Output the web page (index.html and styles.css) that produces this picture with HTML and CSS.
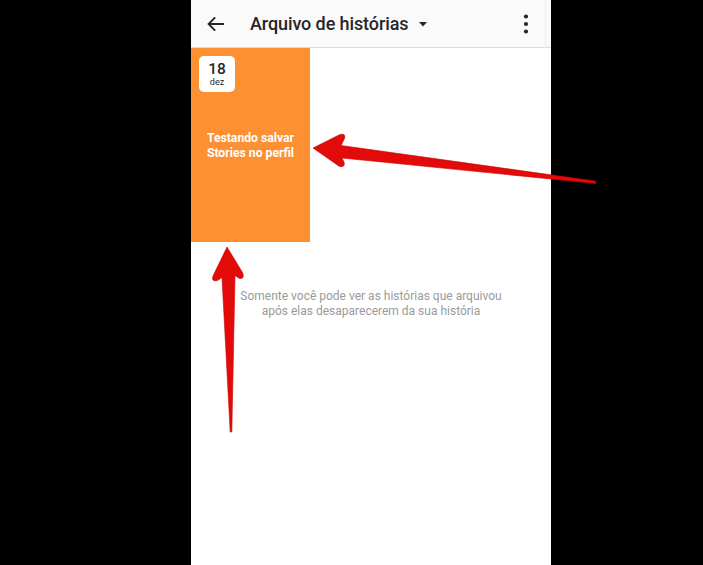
FILE: index.html
```html
<!DOCTYPE html>
<html lang="pt">
<head>
<meta charset="utf-8">
<title>Arquivo de histórias</title>
<link rel="stylesheet" href="styles.css">
</head>
<body>
<div class="phone">
  <header class="topbar">
    <svg class="back" width="18" height="16" viewBox="0 0 18 16"><path d="M17 8H1.8M8.2 1.4L1.6 8l6.6 6.6" fill="none" stroke="#262626" stroke-width="1.9"/></svg>
    <div class="title">Arquivo de histórias</div>
    <svg class="caret" width="8" height="5" viewBox="0 0 8 5"><path d="M0 0h8L4 4.5z" fill="#262626"/></svg>
    <div class="spacer"></div>
    <svg class="kebab" width="6" height="20" viewBox="0 0 6 20"><circle cx="3" cy="2.5" r="2.1" fill="#262626"/><circle cx="3" cy="10" r="2.1" fill="#262626"/><circle cx="3" cy="17.5" r="2.1" fill="#262626"/></svg>
  </header>
  <main class="content">
    <div class="grid">
      <div class="tile">
        <div class="badge"><span class="day">18</span><span class="month">dez</span></div>
        <div class="tile-text">Testando salvar<br>Stories no perfil</div>
      </div>
    </div>
    <p class="hint">Somente você pode ver as histórias que arquivou<br>após elas desaparecerem da sua história</p>
  </main>
  <div class="scrollline"></div>
</div>
<svg class="arrows" width="703" height="565" viewBox="0 0 703 565">
  <path d="M313,148 L340,134.5 Q346,133 344.5,138.5 L341,145.5 L595,181 L596,183.5 L342,158 L344,162 Q345.5,167.5 339.5,166.5 Z" fill="#e30a0a" stroke="#c80000" stroke-width="0.6"/>
  <path d="M227,247 L242.5,272.5 Q245,279 239.5,278.5 L235,275.5 L231.8,432 L230.2,432 L222,277.5 L217.5,280.5 Q211,282 213,276 Z" fill="#e30a0a" stroke="#c80000" stroke-width="0.6"/>
</svg>
</body>
</html>
```

FILE: styles.css
```css
html, body {
  margin: 0;
  padding: 0;
}
body {
  width: 703px;
  height: 565px;
  background: #000;
  overflow: hidden;
  position: relative;
  font-family: Roboto, "Noto Sans", "Liberation Sans", sans-serif;
}
.phone {
  margin-left: 191px;
  width: 360px;
  height: 565px;
  background: #fff;
  display: flex;
  flex-direction: column;
  position: relative;
}
.topbar {
  height: 47px;
  background: #fafafa;
  border-bottom: 1px solid #dedede;
  display: flex;
  align-items: center;
  padding: 0 22px 0 16px;
  box-sizing: content-box;
}
.back {
  flex: none;
  margin-top: 1px;
}
.title {
  margin-left: 25px;
  font-size: 18px;
  font-weight: 500;
  color: #262626;
  letter-spacing: -0.1px;
}
.caret {
  margin-left: 11px;
  margin-top: 1px;
}
.spacer {
  flex: 1;
}
.content {
  flex: 1;
  display: flex;
  flex-direction: column;
}
.grid {
  display: flex;
}
.tile {
  width: 119px;
  height: 194px;
  background: #fc9033;
  display: flex;
  align-items: center;
  justify-content: center;
  position: relative;
}
.badge {
  position: absolute;
  left: 8px;
  top: 8px;
  width: 36px;
  height: 36px;
  background: #fff;
  border-radius: 5px;
  display: flex;
  flex-direction: column;
  align-items: center;
  justify-content: center;
  color: #262626;
}
.day {
  font-size: 15.5px;
  font-weight: 500;
  line-height: 15px;
  margin-top: 1px;
}
.month {
  font-size: 9px;
  line-height: 10px;
}
.tile-text {
  color: #fff;
  font-size: 12.2px;
  font-weight: 700;
  line-height: 15px;
  text-align: center;
  margin-top: 2px;
}
.hint {
  margin: 47px 0 0;
  text-align: center;
  font-size: 12px;
  line-height: 14.5px;
  color: #9a9a9a;
}
.scrollline {
  position: absolute;
  right: 5px;
  top: 0;
  width: 1px;
  height: 48px;
  background: #ececec;
}
.arrows {
  position: absolute;
  left: 0;
  top: 0;
  pointer-events: none;
}
```
